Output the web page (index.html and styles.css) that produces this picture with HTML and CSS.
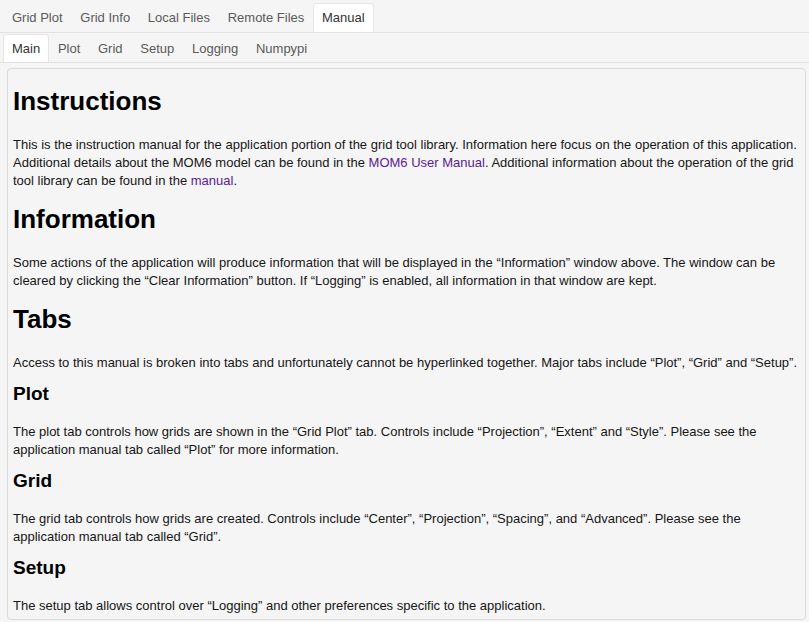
FILE: index.html
```html
<!DOCTYPE html>
<html lang="en">
<head>
<meta charset="utf-8">
<title>Manual</title>
<link rel="stylesheet" href="styles.css">
</head>
<body>
<div class="app">
  <div class="tabbar tabbar-top">
    <div class="tab">Grid Plot</div>
    <div class="tab">Grid Info</div>
    <div class="tab">Local Files</div>
    <div class="tab">Remote Files</div>
    <div class="tab active">Manual</div>
  </div>
  <div class="tabbar tabbar-sub">
    <div class="tab active">Main</div>
    <div class="tab">Plot</div>
    <div class="tab">Grid</div>
    <div class="tab">Setup</div>
    <div class="tab">Logging</div>
    <div class="tab">Numpypi</div>
  </div>
  <div class="panel">
    <h1 class="first">Instructions</h1>
    <p>This is the instruction manual for the application portion of the grid tool library. Information here focus on the operation of this application. Additional details about the MOM6 model can be found in the <a href="#">MOM6 User Manual</a>. Additional information about the operation of the grid tool library can be found in the <a href="#">manual</a>.</p>
    <h1>Information</h1>
    <p>Some actions of the application will produce information that will be displayed in the “Information” window above. The window can be cleared by clicking the “Clear Information” button. If “Logging” is enabled, all information in that window are kept.</p>
    <h1>Tabs</h1>
    <p>Access to this manual is broken into tabs and unfortunately cannot be hyperlinked together. Major tabs include “Plot”, “Grid” and “Setup”.</p>
    <h3>Plot</h3>
    <p>The plot tab controls how grids are shown in the “Grid Plot” tab. Controls include “Projection”, “Extent” and “Style”. Please see the application manual tab called “Plot” for more information.</p>
    <h3>Grid</h3>
    <p>The grid tab controls how grids are created. Controls include “Center”, “Projection”, “Spacing”, and “Advanced”. Please see the application manual tab called “Grid”.</p>
    <h3>Setup</h3>
    <p>The setup tab allows control over “Logging” and other preferences specific to the application.</p>
  </div>
</div>
</body>
</html>
```

FILE: styles.css
```css
html, body {
  margin: 0;
  padding: 0;
  background: #f5f5f5;
  height: 622px;
  overflow: hidden;
  font-family: "Liberation Sans", Arial, Helvetica, sans-serif;
  font-size: 13px;
  color: #161616;
}

.tabbar {
  display: flex;
  align-items: flex-end;
  border-bottom: 1px solid #e2e2e2;
  padding-left: 3px;
}

.tabbar-top {
  padding-top: 3px;
}

.tabbar-sub {
  padding-top: 1px;
}

.tab {
  height: 28px;
  line-height: 28px;
  padding: 0 8px;
  margin-right: -0.3px;
  border: 1px solid transparent;
  border-bottom: none;
  color: #5a5a5a;
  white-space: nowrap;
}

.tabbar-sub .tab {
  height: 27px;
  line-height: 27px;
}

.tab.active {
  background: #ffffff;
  border-color: #e6e6e6;
  border-radius: 3px 3px 0 0;
  color: #333333;
}

.panel {
  box-sizing: border-box;
  height: 552px;
  margin: 5px 3px 0 7px;
  padding: 0 4px 0 5px;
  border: 1px solid #dadada;
  border-radius: 4px;
  background: #f5f5f5;
  overflow: hidden;
}

.panel h1 {
  font-size: 26px;
  line-height: 30px;
  font-weight: bold;
  margin: 14px 0 20px;
  color: #000;
}

.panel h1.first {
  margin-top: 17px;
}

.panel h3 {
  font-size: 19px;
  line-height: 22px;
  font-weight: bold;
  margin: 11px 0 18px;
  color: #000;
}

.panel p {
  margin: 0;
  line-height: 18px;
}

.panel a {
  color: #5a1a96;
  text-decoration: none;
}
```
